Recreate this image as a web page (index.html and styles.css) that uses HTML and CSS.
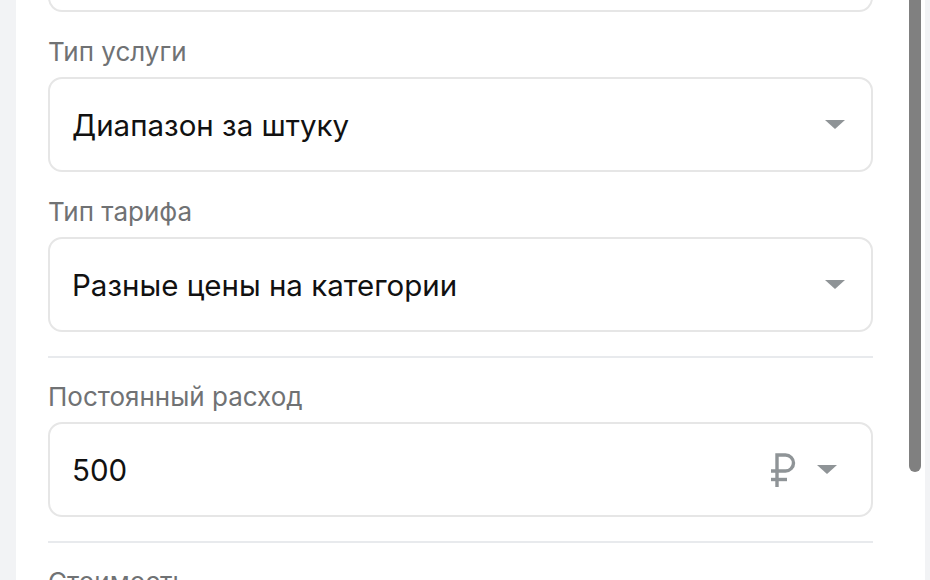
FILE: index.html
```html
<!DOCTYPE html>
<html lang="ru">
<head>
<meta charset="utf-8">
<link rel="stylesheet" href="styles.css">
</head>
<body>
<div class="page">
  <div class="panel">
    <div class="content">
      <div class="field">
        <div class="box box-top"></div>
      </div>
      <div class="field">
        <div class="label">Тип услуги</div>
        <div class="box">
          <span class="value">Диапазон за штуку</span>
          <span class="caret"></span>
        </div>
      </div>
      <div class="field">
        <div class="label">Тип тарифа</div>
        <div class="box">
          <span class="value">Разные цены на категории</span>
          <span class="caret"></span>
        </div>
      </div>
      <hr class="divider">
      <div class="field">
        <div class="label">Постоянный расход</div>
        <div class="box">
          <span class="value">500</span>
          <span class="unit">
            <svg class="ruble" width="27" height="34" viewBox="0 0 27 34" fill="none" stroke="#8f9497" stroke-width="3.4">
              <path d="M7 34V2h8.5a8 8 0 0 1 0 16H1"/>
              <path d="M1 26.5h16"/>
            </svg>
            <span class="caret"></span>
          </span>
        </div>
      </div>
      <hr class="divider">
      <div class="field">
        <div class="label">Стоимость</div>
      </div>
    </div>
    <div class="track"><div class="thumb"></div></div>
  </div>
  <div class="edge"></div>
</div>
</body>
</html>
```

FILE: styles.css
```css
html, body {
  margin: 0;
  padding: 0;
  background: #f2f3f5;
  font-family: Inter, "Noto Sans", sans-serif;
}
.page {
  display: flex;
  height: 580px;
  overflow: hidden;
  padding-left: 16px;
}
.panel {
  flex: 1;
  display: flex;
  background: #fff;
}
.edge {
  width: 5px;
}
.content {
  flex: 1;
  padding: 0 36px 0 32px;
  display: flex;
  flex-direction: column;
  gap: 26px;
  overflow: hidden;
}
.content > * {
  flex-shrink: 0;
}
.field {
  display: flex;
  flex-direction: column;
}
.label {
  font-size: 26px;
  line-height: 28px;
  color: #707274;
  margin-bottom: 11px;
  white-space: nowrap;
}
.box {
  box-sizing: border-box;
  height: 95px;
  flex-shrink: 0;
  border: 2px solid #e6e6e6;
  border-radius: 14px;
  display: flex;
  align-items: center;
  padding: 0 26px 0 22px;
}
.box-top {
  margin-top: -83px;
}
.value {
  flex: 1;
  font-size: 29.5px;
  color: #111;
  white-space: nowrap;
}
.caret {
  width: 0;
  height: 0;
  border-left: 10px solid transparent;
  border-right: 10px solid transparent;
  border-top: 9px solid #8f9497;
}
.unit {
  display: flex;
  align-items: center;
  gap: 20px;
  margin-right: 8px;
}
.ruble {
  display: block;
}
.divider {
  border: 0;
  height: 2px;
  background: #e8eaed;
  margin: -2px 0 -1px;
}
.track {
  width: 16px;
}
.thumb {
  width: 12px;
  height: 472px;
  background: #808080;
  border-radius: 0 0 6px 6px;
}
```
